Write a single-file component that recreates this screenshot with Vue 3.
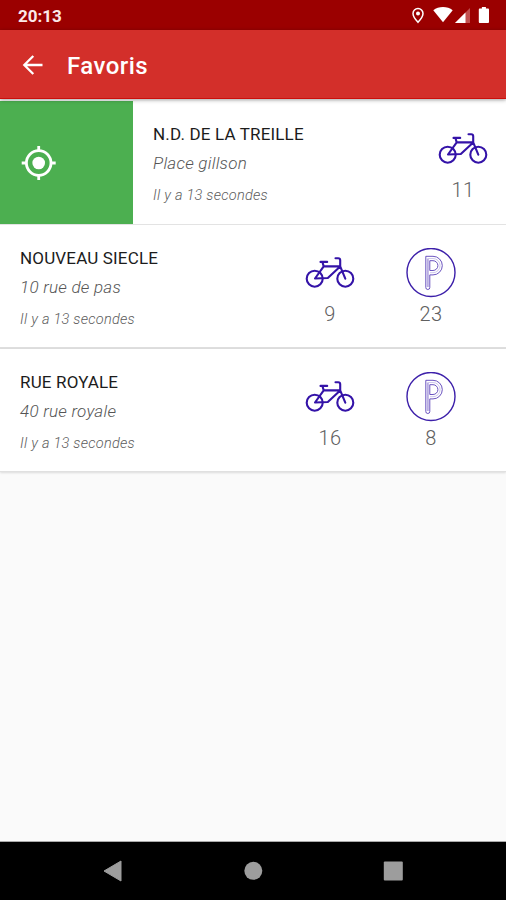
<script setup>
const stations = [
  { name: 'N.D. DE LA TREILLE', address: 'Place gillson', updated: 'Il y a 13 secondes', bikes: 11, slots: null, swiped: true },
  { name: 'NOUVEAU SIECLE', address: '10 rue de pas', updated: 'Il y a 13 secondes', bikes: 9, slots: 23, swiped: false },
  { name: 'RUE ROYALE', address: '40 rue royale', updated: 'Il y a 13 secondes', bikes: 16, slots: 8, swiped: false }
]
</script>

<template>
  <div class="screen">
    <div class="status">
      <span class="clock">20:13</span>
      <svg class="status-icons" width="82" height="30" viewBox="0 0 82 30">
        <path d="M8 8.500a5 5 0 0 1 5 5c0 3.400-5 8.800-5 8.800s-5-5.400-5-8.800a5 5 0 0 1 5-5z" fill="none" stroke="#fff" stroke-width="1.500" />
        <circle cx="8" cy="13.400" r="2" fill="#fff" />
        <path d="M23.300 10.200C28.500 6 37.500 6 42.700 10.200L33 22.300z" fill="#fff" />
        <path d="M60 8v15H45z" fill="#c25050" />
        <path d="M55.500 12.500V23h-10.500z" fill="#fff" />
        <path d="M71.200 7h4v1.600h2c.7 0 1.100.4 1.100 1.100v12c0 .8-.4 1.300-1.200 1.300h-7.800c-.8 0-1.200-.5-1.200-1.300v-12c0-.7.4-1.100 1.100-1.100h2z" fill="#fff" transform="translate(.7)" />
      </svg>
    </div>
    <header class="bar">
      <svg class="back" width="22" height="22" viewBox="0 0 22 22" fill="none" stroke="#fff" stroke-width="2.300">
        <path d="M20.500 11H2.500M11.300 2L2.300 11l9 9" />
      </svg>
      <h1>Favoris</h1>
    </header>
    <main>
      <section v-for="s in stations" :key="s.name" class="row" :class="{ swiped: s.swiped }">
        <div v-if="s.swiped" class="action">
          <svg width="36" height="36" viewBox="0 0 36 36" fill="none" stroke="#fff">
            <circle cx="17.700" cy="18" r="12.300" stroke-width="2.800" />
            <circle cx="17.700" cy="18" r="6.300" fill="#fff" stroke="none" />
            <path d="M17.700 1v5M17.700 30v5M.7 18h5M29.700 18h5" stroke-width="2.800" />
          </svg>
        </div>
        <div class="info">
          <div class="name">{{ s.name }}</div>
          <div class="address">{{ s.address }}</div>
          <div class="updated">{{ s.updated }}</div>
        </div>
        <div class="stat">
          <svg width="50" height="50" viewBox="0 0 50 50" fill="none" stroke="#3413a8" stroke-width="2.100" stroke-linecap="round" stroke-linejoin="round">
            <circle cx="9.700" cy="30.700" r="8" />
            <circle cx="40.300" cy="30.700" r="8" />
            <path d="M15.500 13.900h6.700M17.500 14.200l1.200 4.200L10 30.500l12.800-.5L35.200 18.400H18.700M30.500 10.200h2.700q2 0 2 2v6.200l5.100 12.300" />
          </svg>
          <span>{{ s.bikes }}</span>
        </div>
        <div v-if="s.slots !== null" class="stat slots">
          <svg width="50" height="50" viewBox="0 0 50 50" fill="none" stroke="#3d20aa">
            <circle cx="25" cy="24.500" r="24" stroke-width="1.400" />
            <path d="M19.800 39.500V8.300H27a9.300 9.300 0 0 1 0 18.600h-3.200v12.600a2 2 0 0 1-4 0zM23.800 12.700H27a4.900 4.900 0 0 1 0 9.800h-3.200z" fill="#fff" fill-rule="evenodd" stroke="#5a41b8" stroke-width=".9" />
            <path d="M21.800 10.500V39" stroke="#b9aee3" stroke-width="2" />
            <path d="M22 10.500h5a7.100 7.100 0 0 1 0 14.200h-3" stroke="#cfc8ec" stroke-width="1" />
          </svg>
          <span>{{ s.slots }}</span>
        </div>
      </section>
    </main>
    <nav>
      <svg width="20" height="22" viewBox="0 0 20 22"><path d="M1 11L18 1v20z" fill="#9d9d9d" stroke="#9d9d9d" stroke-linejoin="round" /></svg>
      <svg width="20" height="20" viewBox="0 0 20 20"><circle cx="10.300" cy="9.800" r="9" fill="#9d9d9d" /></svg>
      <svg width="20" height="20" viewBox="0 0 20 20"><rect x=".8" y=".5" width="19" height="19" rx="1" fill="#9d9d9d" /></svg>
    </nav>
  </div>
</template>

<style>
body { margin: 0; }
</style>

<style scoped>
.screen {
  width: 506px;
  height: 900px;
  display: flex;
  flex-direction: column;
  overflow: hidden;
  background: #fafafa;
  font-family: Roboto, "Liberation Sans", sans-serif;
}
.status {
  height: 30px;
  flex: none;
  display: flex;
  align-items: center;
  justify-content: space-between;
  background: #9b0000;
  padding: 0 14px 0 18px;
  box-sizing: border-box;
}
.clock {
  color: #fbe9e9;
  font-size: 17px;
  font-weight: 700;
  line-height: 30px;
  padding-top: 2px;
}
.bar {
  height: 69px;
  flex: none;
  box-sizing: border-box;
  display: flex;
  align-items: center;
  gap: 23px;
  padding: 2px 22px 0;
  background: #d32f2a;
  border-bottom: 1.500px solid #cb0f0b;
  box-shadow: 0 1px 4px rgba(0, 0, 0, .35);
  z-index: 1;
}
h1 {
  margin: 2px 0 0;
  color: #fff;
  font-size: 24px;
  font-weight: 500;
  letter-spacing: .45px;
  line-height: 30px;
}
main {
  flex: 1;
  padding-top: 2px;
}
.row {
  height: 124px;
  display: flex;
  box-sizing: border-box;
  background: #fff;
  border-bottom: 1px solid #e3e3e3;
}
.row:nth-child(2) {
  height: 124px;
  border-bottom: 2px solid #dedede;
}
.row:last-child {
  height: 123px;
  border-bottom: 1px solid #e0e0e0;
  box-shadow: 0 1px 2px rgba(0, 0, 0, .12);
}
.action {
  width: 133px;
  flex: none;
  display: flex;
  align-items: center;
  box-sizing: border-box;
  padding-left: 21px;
  background: #4caf50;
}
.info {
  width: 260px;
  flex: none;
  box-sizing: border-box;
  padding: 23px 0 0 20px;
  white-space: nowrap;
}
.name {
  color: #1c1c1c;
  font-size: 17px;
  letter-spacing: .16px;
  line-height: 20px;
}
.address {
  margin-top: 9px;
  color: #555;
  font-size: 17px;
  font-style: italic;
  font-weight: 300;
  letter-spacing: .25px;
  line-height: 20px;
}
.updated {
  margin-top: 14px;
  color: #5c5c5c;
  font-size: 14.500px;
  font-style: italic;
  font-weight: 300;
  letter-spacing: .26px;
  line-height: 18px;
}
.stat {
  width: 100px;
  flex: none;
  display: flex;
  flex-direction: column;
  align-items: center;
  padding-top: 23px;
}
.row:not(.swiped) .stat:nth-child(2) { margin-left: 20px; }
.swiped .stat { margin-left: 20px; }
.slots { margin-left: 1px; }
.stat svg { flex: none; }
.stat span {
  margin-top: 4px;
  color: #606060;
  font-size: 20px;
  font-weight: 300;
  letter-spacing: .5px;
  line-height: 24px;
}
nav {
  height: 58px;
  flex: none;
  display: grid;
  grid-template-columns: repeat(3, 140px);
  justify-content: center;
  justify-items: center;
  align-items: center;
  background: #000;
  box-shadow: 0 -1px 0 #aaa;
}
</style>
